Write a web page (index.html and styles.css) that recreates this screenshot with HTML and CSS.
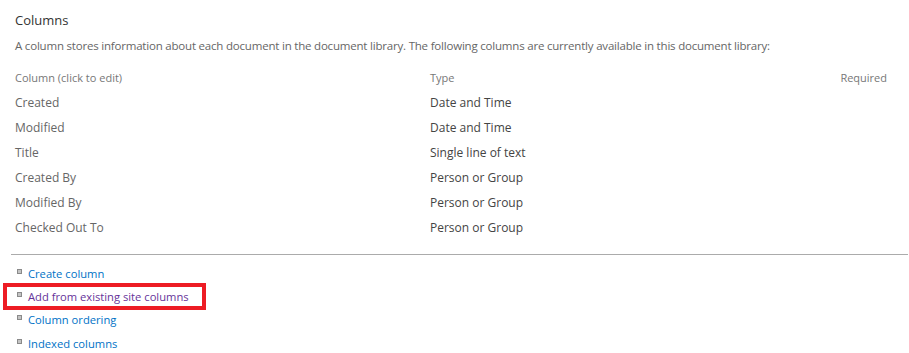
FILE: index.html
```html
<!DOCTYPE html>
<html lang="en">
<head>
    <meta charset="UTF-8">
    <title>Columns</title>
    <link rel="stylesheet" href="styles.css">
</head>
<body>
    <div class="section">
        <h3 class="section-title">Columns</h3>
        <p class="description">A column stores information about each document in the document library. The following columns are currently available in this document library:</p>

        <table class="columns-table">
            <thead>
                <tr>
                    <th class="col-name">Column (click to edit)</th>
                    <th class="col-type">Type</th>
                    <th class="col-required">Required</th>
                </tr>
            </thead>
            <tbody>
                <tr><td>Created</td><td>Date and Time</td><td></td></tr>
                <tr><td>Modified</td><td>Date and Time</td><td></td></tr>
                <tr><td>Title</td><td>Single line of text</td><td></td></tr>
                <tr><td>Created By</td><td>Person or Group</td><td></td></tr>
                <tr><td>Modified By</td><td>Person or Group</td><td></td></tr>
                <tr><td>Checked Out To</td><td>Person or Group</td><td></td></tr>
            </tbody>
        </table>

        <hr class="divider">

        <ul class="links">
            <li><a href="#">Create column</a></li>
            <li class="highlight"><a href="#" class="visited">Add from existing site columns</a></li>
            <li><a href="#">Column ordering</a></li>
            <li><a href="#">Indexed columns</a></li>
        </ul>
    </div>
</body>
</html>
```

FILE: styles.css
```css
body {
    margin: 0;
    background: #fff;
    font-family: "Open Sans", "Noto Sans", sans-serif;
    color: #444;
}
.section {
    padding: 11px 0 0 15px;
}
.section-title {
    margin: 0;
    font-size: 13px;
    font-weight: normal;
    color: #333;
    line-height: 18px;
}
.description {
    margin: 9px 0 0;
    font-size: 11.5px;
    letter-spacing: -0.2px;
    color: #666;
    line-height: 16px;
}
.columns-table {
    margin-top: 16px;
    width: 872px;
    border-collapse: collapse;
}
.columns-table th {
    font-size: 11px;
    font-weight: normal;
    color: #777;
    text-align: left;
    padding: 0 0 4px;
    line-height: 16px;
}
.columns-table th.col-required {
    text-align: right;
    padding-right: 0;
}
.columns-table td {
    font-size: 12px;
    color: #444;
    padding: 0;
    height: 25px;
}
.col-name {
    width: 415px;
}
.col-type {
    width: 300px;
}
.columns-table tbody td:first-child {
    color: #666;
}
.divider {
    margin: 14px 0 0 -4px;
    width: 897px;
    border: none;
    border-top: 1px solid #ababab;
}
.links {
    list-style: none;
    margin: 11px 0 0;
    padding: 0;
}
.links li {
    position: relative;
    padding-left: 13px;
    font-size: 11.2px;
    line-height: 16px;
    height: 16px;
    margin-bottom: 7.2px;
}
.links li::before {
    content: "";
    position: absolute;
    left: 2px;
    top: 3px;
    width: 3px;
    height: 3px;
    background: #c4c4c4;
    border: 1px solid #8a8a8a;
}
.links a {
    color: #0072c6;
    text-decoration: none;
}
.links a.visited {
    color: #663399;
}
.links li.highlight::after {
    content: "";
    position: absolute;
    left: -12px;
    top: -6px;
    width: 195px;
    height: 19px;
    border: 4px solid #ed1c24;
}
```
